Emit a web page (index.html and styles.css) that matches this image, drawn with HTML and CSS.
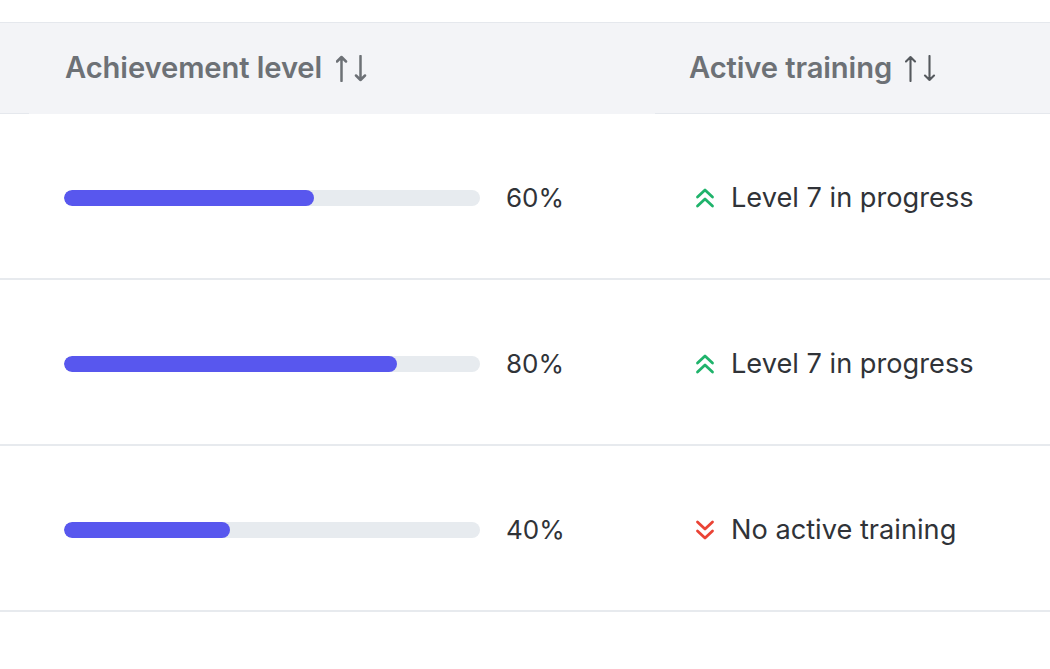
FILE: index.html
```html
<!DOCTYPE html>
<html>
<head>
<meta charset="utf-8">
<link rel="stylesheet" href="styles.css">
</head>
<body>
<div class="table">
  <div class="head">
    <div class="th th-1">Achievement level
      <svg class="sort" width="31" height="27" viewBox="0 0 31 27"><path d="M5.5 26V2M1 6.5L5.5 2L10 6.5M24.5 1V25M20 20.5L24.5 25L29 20.5" fill="none" stroke="currentColor" stroke-width="2.5" stroke-linecap="round" stroke-linejoin="round"/></svg>
    </div>
    <div class="th th-2">Active training
      <svg class="sort" width="31" height="27" viewBox="0 0 31 27"><path d="M5.5 26V2M1 6.5L5.5 2L10 6.5M24.5 1V25M20 20.5L24.5 25L29 20.5" fill="none" stroke="currentColor" stroke-width="2.1" stroke-linecap="round" stroke-linejoin="round"/></svg>
    </div>
  </div>
  <div class="row">
    <div class="td td-1">
      <div class="track"><div class="fill" style="width:60%"></div></div>
      <span class="pct">60%</span>
    </div>
    <div class="td td-2">
      <svg class="chev up" width="20" height="22" viewBox="0 0 20 22"><path d="M2.5 10L10 3L17.5 10M2.5 19L10 12L17.5 19" fill="none" stroke="currentColor" stroke-width="2.8" stroke-linecap="round" stroke-linejoin="round"/></svg>
      <span class="status">Level 7 in progress</span>
    </div>
  </div>
  <div class="row">
    <div class="td td-1">
      <div class="track"><div class="fill" style="width:80%"></div></div>
      <span class="pct">80%</span>
    </div>
    <div class="td td-2">
      <svg class="chev up" width="20" height="22" viewBox="0 0 20 22"><path d="M2.5 10L10 3L17.5 10M2.5 19L10 12L17.5 19" fill="none" stroke="currentColor" stroke-width="2.8" stroke-linecap="round" stroke-linejoin="round"/></svg>
      <span class="status">Level 7 in progress</span>
    </div>
  </div>
  <div class="row">
    <div class="td td-1">
      <div class="track"><div class="fill" style="width:40%"></div></div>
      <span class="pct">40%</span>
    </div>
    <div class="td td-2">
      <svg class="chev down" width="20" height="22" viewBox="0 0 20 22"><path d="M2.5 3L10 10L17.5 3M2.5 12L10 19L17.5 12" fill="none" stroke="currentColor" stroke-width="2.8" stroke-linecap="round" stroke-linejoin="round"/></svg>
      <span class="status">No active training</span>
    </div>
  </div>
</div>
</body>
</html>
```
FILE: styles.css
```css
* { box-sizing: border-box; }
html, body { margin: 0; padding: 0; background: #ffffff; }
body {
  font-family: Inter, "Noto Sans", "Liberation Sans", sans-serif;
  padding-top: 22px;
}
.table {
  border-top: 1px solid #e5e8ed;
}
.head {
  display: grid;
  grid-template-columns: 689px 1fr;
  height: 91px;
  background: #f3f4f7;
  border-bottom: 1px solid #e5e8ed;
  border-image: linear-gradient(to right, #e5e8ed 30px, #f3f4f7 30px, #f3f4f7 655px, #e5e8ed 655px) 1;
}
.th {
  display: flex;
  align-items: center;
  font-size: 29.2px;
  font-weight: 600;
  color: #6d7176;
  letter-spacing: -0.1px;
  padding-bottom: 2px;
}
.th-1 { padding-left: 65px; }
.th .sort { margin-left: 14px; color: #6d7176; margin-top: 2px; }
.th-2 .sort { color: #55595e; margin-left: 13px; }
.row {
  display: grid;
  grid-template-columns: 689px 1fr;
  height: 166px;
  border-bottom: 2px solid #e7eaee;
}
.td {
  display: flex;
  align-items: center;
  padding-top: 3px;
}
.td-1 { padding-left: 64px; }
.track {
  width: 416px;
  height: 16px;
  border-radius: 8px;
  background: #e7ebef;
  overflow: hidden;
}
.fill {
  height: 100%;
  border-radius: 8px;
  background: #5857ee;
}
.pct {
  margin-left: 26px;
  font-size: 26px;
  color: #303338;
}
.td-2 { padding-left: 6px; }
.chev { margin-right: 16px; }
.chev.up { color: #1fb36b; }
.chev.down { color: #ea4335; }
.status {
  font-size: 27.2px;
  color: #303338;
}
```
